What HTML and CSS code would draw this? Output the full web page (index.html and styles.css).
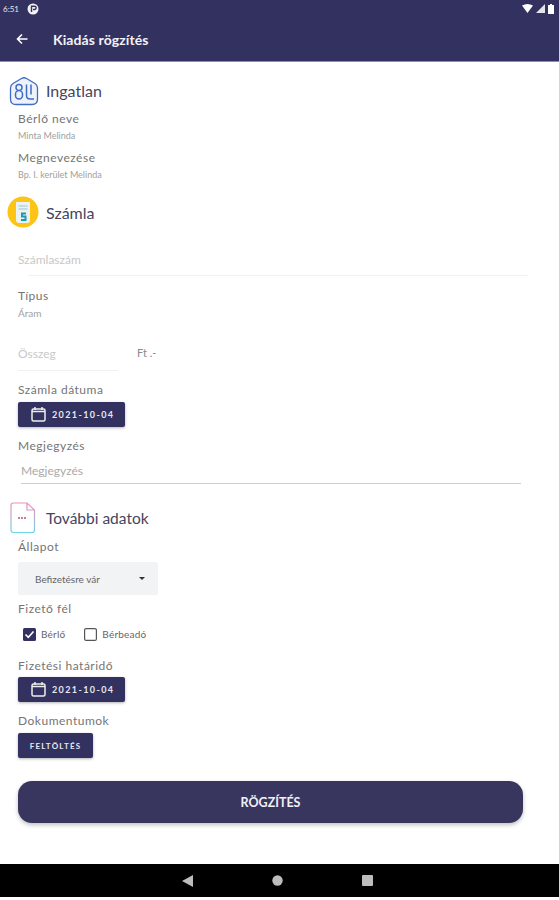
FILE: index.html
```html
<!DOCTYPE html>
<html lang="hu">
<head>
    <meta charset="UTF-8">
    <meta name="viewport" content="width=device-width, initial-scale=1.0">
    <title>Kiadás rögzítés</title>
    <link rel="stylesheet" href="styles.css">
</head>
<body>
    <div id="app">
        <div class="status-bar">
            <span class="clock">6:51</span>
            <svg class="status-dot" width="12" height="12" viewBox="0 0 12 12"><circle cx="6" cy="6" r="5.5" fill="#f2f2f6"/><path d="M4.5 9V3.2h3a1.5 1.5 0 0 1 0 3.3H6" fill="none" stroke="#33315f" stroke-width="1.4"/></svg>
            <div class="status-icons">
                <svg width="11" height="9" viewBox="0 0 11 9"><path d="M0 1.5Q5.500-1.500 11 1.500L5.500 9Z" fill="#fff"/></svg>
                <svg width="9" height="9" viewBox="0 0 9 9"><path d="M9 0V9H0Z" fill="#e4e4ec"/></svg>
                <svg width="6" height="10" viewBox="0 0 6 10"><path d="M2 0H4V1H6V10H0V1H2Z" fill="#fff"/></svg>
            </div>
        </div>
        <header class="toolbar">
            <svg class="back" width="12" height="12" viewBox="0 0 12 12"><path d="M11.500 6H1.500M6 1.500L1.500 6L6 10.500" fill="none" stroke="#fff" stroke-width="1.600"/></svg>
            <h1>Kiadás rögzítés</h1>
        </header>

        <main class="form">
            <section class="section-ingatlan">
                <div class="section-title title-ingatlan">
                    <svg class="section-icon" width="30" height="30" viewBox="0 0 30 30">
                        <path d="M12.500 2.500Q15 1 17.500 2.500L26 7.500Q28.500 9 28.500 12V23Q28.500 28.500 23 28.500H7Q1.500 28.500 1.500 23V12Q1.500 9 4 7.500Z" fill="#eef3fb" stroke="#3f6cc4" stroke-width="1.300"/>
                        <path d="M10 8.500a3 3 0 0 1 3 3a3 3 0 0 1-3 3a3.500 3.500 0 0 1 3.500 3.500v1.500a3.500 3.500 0 0 1-7 0v-1.500a3.500 3.500 0 0 1 3.500-3.500a3 3 0 0 1-3-3a3 3 0 0 1 3-3ZM17.500 8.500v11q0 3.500 3.500 3.500H25M22 8.500v10" fill="none" stroke="#3f6cc4" stroke-width="1.500"/>
                    </svg>
                    <h2>Ingatlan</h2>
                </div>
                <div class="label label-first">Bérlő neve</div>
                <div class="value">Minta Melinda</div>
                <div class="label label-second">Megnevezése</div>
                <div class="value">Bp. I. kerület Melinda</div>
            </section>

            <section>
                <div class="section-title title-szamla">
                    <svg class="section-icon" width="32" height="32" viewBox="0 0 32 32">
                        <circle cx="16" cy="16" r="15.500" fill="#fdc315"/>
                        <path d="M9 6H23V24Q23 27 20 27H12Q9 27 9 24Z" fill="#e9f2f4"/>
                        <path d="M11.500 10H20.500M11.500 13H20.500" stroke="#b9d3da" stroke-width="1.500"/>
                        <path d="M19 17.500H15V20.500H18.500V24H14" fill="none" stroke="#1f9aa8" stroke-width="2"/>
                    </svg>
                    <h2>Számla</h2>
                </div>
                <div class="input-line invoice-number">Számlaszám</div>
                <div class="label label-type">Típus</div>
                <div class="value value-type">Áram</div>
                <div class="amount-row">
                    <div class="input-line amount">Összeg</div>
                    <span class="currency">Ft .-</span>
                </div>
                <div class="label label-date">Számla dátuma</div>
                <button class="date-button">
                    <svg width="15" height="15" viewBox="0 0 15 15"><path d="M4 0V3M11 0V3" stroke="#eee" stroke-width="1.500"/><rect x="1" y="2" width="13" height="12" rx="1.500" fill="none" stroke="#eee" stroke-width="1.500"/><path d="M1 4.500H14" stroke="#eee" stroke-width="1.500"/></svg>
                    2021-10-04
                </button>
                <div class="label label-note">Megjegyzés</div>
                <div class="input-line note">Megjegyzés</div>
            </section>

            <section>
                <div class="section-title title-more">
                    <svg class="section-icon" width="26" height="32" viewBox="0 0 26 32">
                        <defs><linearGradient id="doc" x1="0" y1="0" x2="0" y2="1"><stop offset="0" stop-color="#f08fb4"/><stop offset="1" stop-color="#6fd3ea"/></linearGradient></defs>
                        <path d="M3 1H17L24.500 8V28Q24.500 30.500 22 30.500H3.500Q1 30.500 1 28V3.500Q1 1 3 1ZM17 1V8H24.500" fill="#fff" stroke="url(#doc)" stroke-width="1.200"/>
                        <path d="M8 16H17" stroke="#b05a7c" stroke-width="1.300" stroke-dasharray="2 1"/>
                    </svg>
                    <h2>További adatok</h2>
                </div>
                <div class="label label-state">Állapot</div>
                <div class="select">
                    <span>Befizetésre vár</span>
                    <i class="caret"></i>
                </div>
                <div class="label label-payer">Fizető fél</div>
                <div class="checks">
                    <span class="check">
                        <svg width="13" height="13" viewBox="0 0 13 13"><rect width="13" height="13" rx="1.500" fill="#33315f"/><path d="M2.500 6.500L5.300 9.300L10.500 3.500" fill="none" stroke="#fff" stroke-width="1.600"/></svg>
                        Bérlő
                    </span>
                    <span class="check">
                        <svg width="13" height="13" viewBox="0 0 13 13"><rect x=".6" y=".6" width="11.800" height="11.800" rx="1.500" fill="none" stroke="#555" stroke-width="1.200"/></svg>
                        Bérbeadó
                    </span>
                </div>
                <div class="label label-deadline">Fizetési határidő</div>
                <button class="date-button date-deadline">
                    <svg width="15" height="15" viewBox="0 0 15 15"><path d="M4 0V3M11 0V3" stroke="#eee" stroke-width="1.500"/><rect x="1" y="2" width="13" height="12" rx="1.500" fill="none" stroke="#eee" stroke-width="1.500"/><path d="M1 4.500H14" stroke="#eee" stroke-width="1.500"/></svg>
                    2021-10-04
                </button>
                <div class="label label-docs">Dokumentumok</div>
                <button class="upload-button">FELTÖLTÉS</button>
            </section>

            <button class="save-button">RÖGZÍTÉS</button>
        </main>

        <nav class="nav-bar">
            <svg width="11" height="12" viewBox="0 0 11 12"><path d="M11 0V12L0 6Z" fill="#bdbdbd"/></svg>
            <svg width="11" height="11" viewBox="0 0 11 11"><circle cx="5.500" cy="5.500" r="5.200" fill="#bdbdbd"/></svg>
            <svg width="11" height="11" viewBox="0 0 11 11"><rect width="11" height="11" rx="1" fill="#bdbdbd"/></svg>
        </nav>
    </div>
</body>
</html>
```

FILE: styles.css
```css
* {
    box-sizing: border-box;
}

body {
    margin: 0;
    font-family: 'Lato', 'Open Sans', sans-serif;
    background-color: #fff;
    color: #666;
}

#app {
    width: 559px;
    height: 900px;
    display: flex;
    flex-direction: column;
    background-color: #fff;
    overflow: hidden;
}

.status-bar {
    height: 17px;
    display: flex;
    align-items: center;
    padding: 0 5px 0 3px;
    background-color: #33315f;
    color: #e8e8ee;
    font-size: 8px;
}

.status-dot {
    margin-left: 8px;
}

.status-icons {
    margin-left: auto;
    display: flex;
    align-items: center;
    gap: 3px;
}

.toolbar {
    height: 45px;
    display: flex;
    align-items: center;
    padding: 0 0 0 16px;
    background-color: #33315f;
    border-bottom: 1px solid #8e8ea6;
}

.toolbar h1 {
    margin: 0 0 0 25px;
    font-size: 14px;
    font-weight: 700;
    letter-spacing: .1px;
    color: #f2f2f6;
}

.form {
    flex: 1;
    padding: 0 36px 0 18px;
}

.section-title {
    display: flex;
    align-items: center;
    margin-left: -9px;
    height: 32px;
}

.section-title h2 {
    margin: 0;
    font-size: 16px;
    font-weight: 400;
    color: #45455f;
}

.title-ingatlan {
    margin-top: 13px;
}

.title-ingatlan h2 {
    margin: 0 0 2px 7px;
}

.title-szamla {
    margin-top: 16px;
    margin-left: -11px;
}

.title-szamla h2 {
    margin-left: 7px;
}

.title-more {
    margin-top: 18px;
    margin-left: -8px;
}

.title-more h2 {
    margin-left: 10px;
    font-size: 15.500px;
}

.label {
    font-size: 12px;
    line-height: 16px;
    color: #757575;
    letter-spacing: .5px;
}

.value {
    margin-top: 4px;
    font-size: 9px;
    line-height: 10px;
    color: #a0a0a0;
}

.value-type {
    font-size: 10px;
}

.label-first {
    margin-top: 4px;
}

.label-second {
    margin-top: 9px;
}

.input-line {
    font-size: 12px;
    line-height: 16px;
    color: #c8c8c8;
    border-bottom: 1px solid #f1f1f1;
}

.invoice-number {
    height: 24px;
    margin: 24px -5px 0 10px;
    text-indent: -10px;
}

.label-type {
    margin-top: 12px;
}

.amount-row {
    display: flex;
    align-items: flex-start;
    margin-top: 28px;
}

.amount {
    width: 100px;
    height: 25px;
}

.currency {
    margin-left: 19px;
    font-size: 11px;
    line-height: 14px;
    color: #8a8a8a;
}

.label-date {
    margin-top: 11px;
}

.date-button {
    margin-top: 4px;
    width: 107px;
    height: 25px;
    display: flex;
    align-items: center;
    gap: 6px;
    padding: 0 0 0 13px;
    border: 0;
    border-radius: 2px;
    background-color: #33315f;
    color: #e8e8f0;
    font-family: inherit;
    font-size: 9px;
    font-weight: 700;
    letter-spacing: 1.400px;
    box-shadow: 0 1px 3px rgba(0, 0, 0, .3);
}

.date-deadline {
    margin-top: 3px;
}

.label-note {
    margin-top: 11px;
}

.note {
    height: 22px;
    margin: 8px 2px 0 3px;
    padding-top: 1px;
    color: #aaa;
    border-bottom: 1px solid #cfcfcf;
}

.label-state {
    margin-top: 5px;
}

.select {
    margin-top: 7px;
    width: 140px;
    height: 33px;
    display: flex;
    align-items: center;
    justify-content: space-between;
    padding: 0 13px 0 17px;
    background-color: #f1f3f4;
    border-radius: 2px;
    font-size: 10px;
    color: #666;
}

.caret {
    border-left: 3px solid transparent;
    border-right: 3px solid transparent;
    border-top: 3px solid #333;
}

.label-payer {
    margin-top: 6px;
}

.checks {
    display: flex;
    gap: 19px;
    margin: 9px 0 0 5px;
    height: 16px;
    align-items: center;
}

.check {
    display: flex;
    align-items: center;
    gap: 5px;
    font-size: 10px;
    letter-spacing: .2px;
    color: #666;
}

.label-deadline {
    margin-top: 16px;
}

.label-docs {
    margin-top: 11px;
}

.upload-button {
    margin-top: 4px;
    width: 75px;
    height: 25px;
    padding: 0;
    border: 0;
    border-radius: 2px;
    background-color: #33315f;
    color: #e8e8f0;
    font-family: inherit;
    font-size: 8px;
    font-weight: 700;
    letter-spacing: 1.200px;
    box-shadow: 0 1px 3px rgba(0, 0, 0, .3);
}

.save-button {
    display: block;
    width: 505px;
    height: 42px;
    margin-top: 23px;
    border: 0;
    border-radius: 14px;
    background-color: #38355f;
    color: #f0f0f6;
    font-family: inherit;
    font-size: 12.500px;
    font-weight: 700;
    box-shadow: 0 2px 4px rgba(0, 0, 0, .25);
}

.nav-bar {
    height: 33px;
    margin-bottom: 3px;
    display: flex;
    align-items: center;
    justify-content: center;
    gap: 79px;
    padding-right: 5px;
    background-color: #000;
}
```
